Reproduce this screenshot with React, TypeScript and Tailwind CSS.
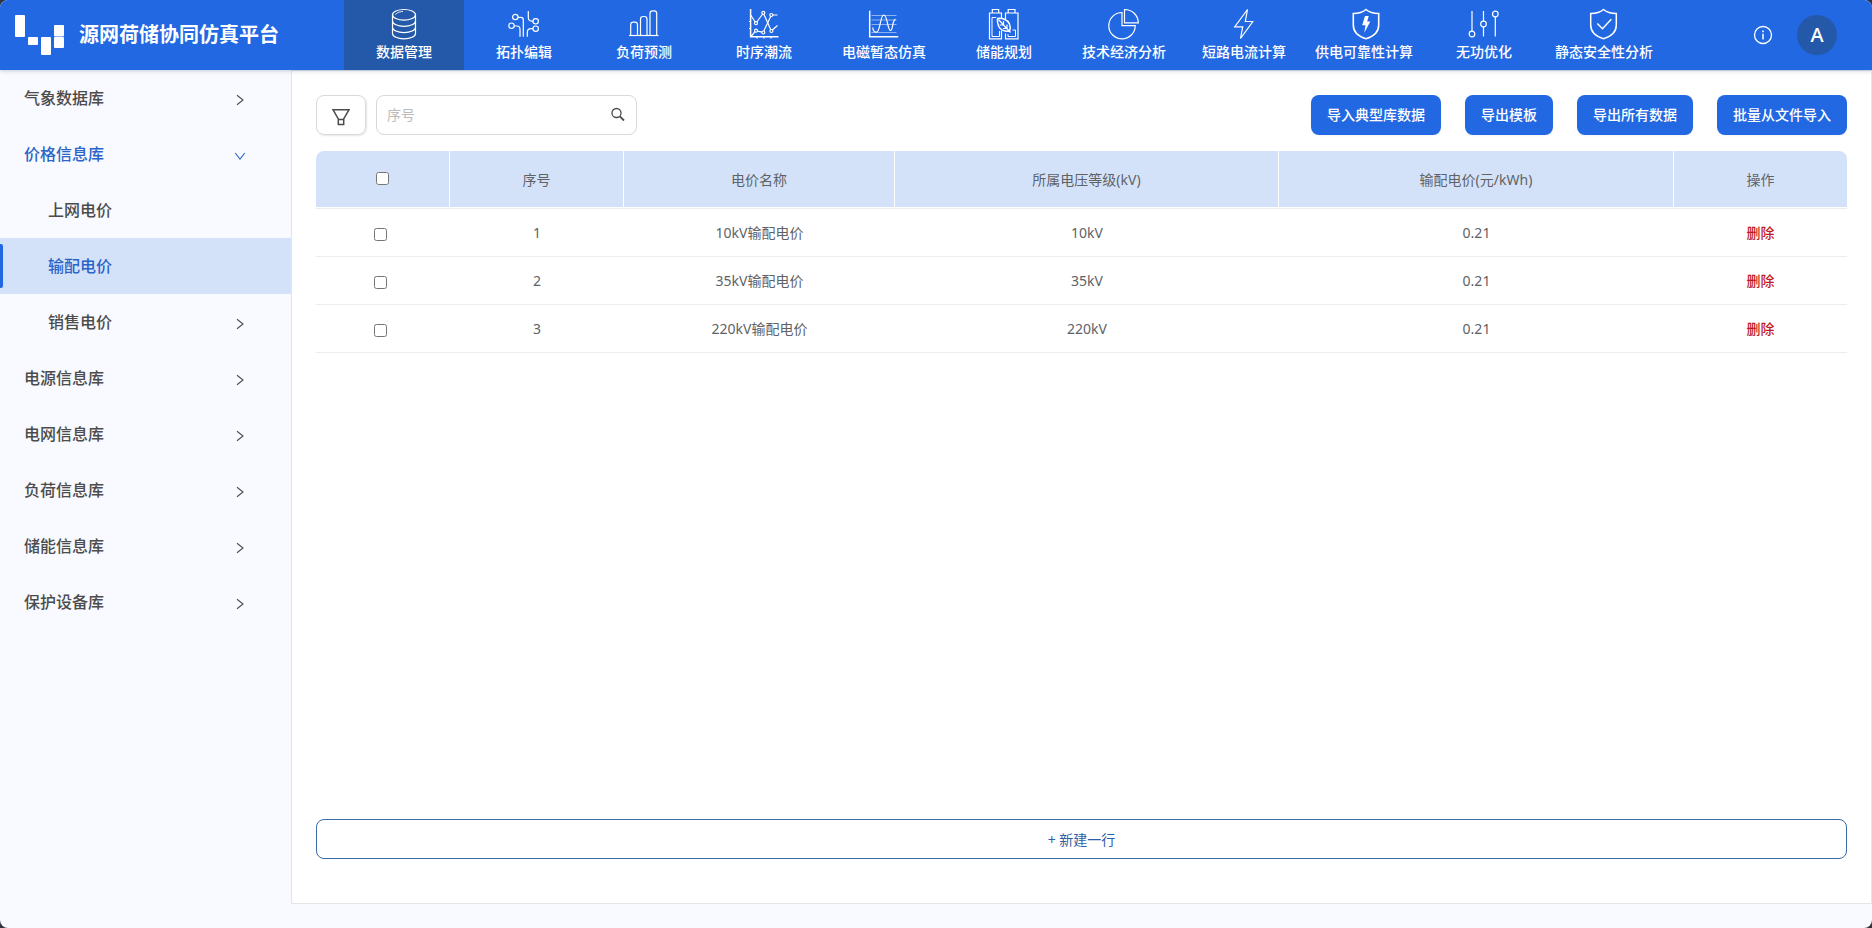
import type { ReactNode } from "react";

interface NavItem {
  label: string;
  icon: ReactNode;
}

interface MenuItem {
  label: string;
  state?: "open" | "active";
  child?: boolean;
  leaf?: boolean;
}

interface PriceRow {
  id: number;
  name: string;
  level: string;
  price: string;
}

const navItems: NavItem[] = [
  {
    label: "数据管理",
    icon: (
      <>
        <ellipse cx="16" cy="6.8" rx="11.5" ry="5.3" />
        <path d="M4.5 6.8V25.5C4.5 28.5 9.6 30.8 16 30.8S27.5 28.5 27.5 25.5V6.8" />
        <path d="M4.5 13C4.5 16 9.6 18.3 16 18.3S27.5 16 27.5 13" />
        <path d="M4.5 19.3C4.5 22.3 9.6 24.6 16 24.6S27.5 22.3 27.5 19.3" />
        <path d="M7.5 6.8C8 5 11.5 3.6 15 3.5" strokeWidth="0.9" />
      </>
    ),
  },
  {
    label: "拓扑编辑",
    icon: (
      <>
        <circle cx="7.3" cy="9" r="2.7" />
        <circle cx="3.5" cy="17.7" r="2.7" />
        <circle cx="27.7" cy="13.3" r="2.7" />
        <circle cx="27.7" cy="20.7" r="2.7" />
        <path d="M10 9.3H12.8Q15.3 9.3 15.3 12V28.7" />
        <path d="M6.2 18H9Q12 18 12 21.5V28.7" />
        <path d="M20.3 3V9.5Q20.3 13.3 25 13.3" />
        <path d="M25 20.7H23Q19.3 20.7 19.3 24.5V28.7" />
      </>
    ),
  },
  {
    label: "负荷预测",
    icon: (
      <>
        <path d="M1 27.5H30.5" />
        <path d="M2.7 27.5V17Q2.7 14.2 5.2 14.2H7Q9.5 14.2 9.5 17V27.5" />
        <path d="M12.5 27.5V11.2Q12.5 8.5 15 8.5H16.5Q19 8.5 19 11.2V27.5" />
        <path d="M22 27.5V5.5Q22 2.8 24.5 2.8H26.2Q28.7 2.8 28.7 5.5V27.5" />
      </>
    ),
  },
  {
    label: "时序潮流",
    icon: (
      <>
        <path d="M2.6 1V28.8H30.5" strokeWidth="1.5" />
        <path d="M1 13.5H2.6M1 20.5H2.6M9 28.8V30.5M16 28.8V30.5M23 28.8V30.5" />
        <path d="M2.6 7L7.3 14M8.7 14L14.7 6M15.9 6.2L22.8 21.7M24.3 22L29.5 17.5" />
        <path d="M3 28.5L7 23.7M9.3 23L14 24.2M15.8 23L22.7 8.4M24.5 7H29.5" />
        <circle cx="8" cy="15.2" r="1.5" />
        <circle cx="15.3" cy="4.8" r="1.5" />
        <circle cx="23.4" cy="23" r="1.5" />
        <circle cx="8" cy="22.7" r="1.5" />
        <circle cx="15.3" cy="24.5" r="1.5" />
        <circle cx="23.3" cy="7" r="1.5" />
      </>
    ),
  },
  {
    label: "电磁暂态仿真",
    icon: (
      <>
        <path d="M1.7 2.7V28.8H30.3" strokeWidth="1.5" />
        <path
          d="M3.5 7.5H28.5M3.5 12H28.5M3.5 16.5H28.5M3.5 24.5H28.5"
          strokeWidth="0.7"
          opacity="0.7"
        />
        <path d="M4.7 19.5C5 22.5 6.5 24.2 8.3 24.2C12.5 24.2 12 7 15.8 7C19.5 7 19.5 22.5 22.5 22.5C25.2 22.5 24 12 27.5 11.3" />
      </>
    ),
  },
  {
    label: "储能规划",
    icon: (
      <>
        <path d="M4.3 5V1.5H10.7V5M20.2 5V1.5H27V5" />
        <path d="M13.5 10V5H1.5V30.8H13.5V22.5" />
        <path d="M11.5 23V28.5H4V9.5H8" strokeWidth="1" />
        <path d="M17.5 11V5H30V30.8H17.5V25.5" />
        <path d="M20 26V28.5H27.5V22H24.5" strokeWidth="1" />
        <path
          d="M9.5 10.5C14 9.8 19.5 11.5 21.5 16C22.5 18.5 22.2 21.5 21.5 23.3C17.5 23.5 12.5 22.5 10.5 18C9.5 15.5 9.2 13 9.5 10.5Z"
          strokeWidth="1.5"
        />
        <path d="M10.5 11.5L22.5 24.5M15.5 13V17H11.5M19 16.5V20.5H15" strokeWidth="1.2" />
      </>
    ),
  },
  {
    label: "技术经济分析",
    icon: (
      <>
        <path d="M14 4.5A13.2 13.2 0 1 0 27.2 17.7H14Z" />
        <path d="M16.5 1.5V14.8H30.3A13.5 13.5 0 0 0 16.5 1.5Z" />
      </>
    ),
  },
  {
    label: "短路电流计算",
    icon: <path d="M19.5 1.5L6.7 18.8H14.7L12.5 30.5L24.8 13.5H17.3Z" />,
  },
  {
    label: "供电可靠性计算",
    icon: (
      <>
        <path
          d="M18 1.5C21.5 4.5 26 5.5 30.7 5.5V17C30.7 24 25.5 28.5 18 30.7C10.5 28.5 5.3 24 5.3 17V5.5C10 5.5 14.5 4.5 18 1.5Z"
          strokeWidth="1.6"
        />
        <path
          d="M17 8H20.7L19.2 13.5H22.3L16.3 24.7L17.5 17.3H14.2Z"
          fill="currentColor"
          stroke="none"
        />
      </>
    ),
  },
  {
    label: "无功优化",
    icon: (
      <>
        <path d="M4 3V23M15.5 3V13M15.5 19V28.5M27.3 9V28.5" />
        <circle cx="4" cy="26" r="2.8" />
        <circle cx="15.5" cy="16" r="2.8" />
        <circle cx="27.3" cy="6" r="2.8" />
      </>
    ),
  },
  {
    label: "静态安全性分析",
    icon: (
      <>
        <path
          d="M15.5 1.5C19 4.5 23.5 5.5 28.3 5.5V17C28.3 24 23 28.5 15.5 30.7C8 28.5 2.7 24 2.7 17V5.5C7.5 5.5 12 4.5 15.5 1.5Z"
          strokeWidth="1.5"
        />
        <path d="M9.3 15.5L14.5 20.7L23.3 11.3" strokeWidth="1.5" />
      </>
    ),
  },
];

const menuItems: MenuItem[] = [
  { label: "气象数据库" },
  { label: "价格信息库", state: "open" },
  { label: "上网电价", child: true, leaf: true },
  { label: "输配电价", child: true, leaf: true, state: "active" },
  { label: "销售电价", child: true },
  { label: "电源信息库" },
  { label: "电网信息库" },
  { label: "负荷信息库" },
  { label: "储能信息库" },
  { label: "保护设备库" },
];

const rows: PriceRow[] = [
  { id: 1, name: "10kV输配电价", level: "10kV", price: "0.21" },
  { id: 2, name: "35kV输配电价", level: "35kV", price: "0.21" },
  { id: 3, name: "220kV输配电价", level: "220kV", price: "0.21" },
];

const actions = ["导入典型库数据", "导出模板", "导出所有数据", "批量从文件导入"];

const columns = ["序号", "电价名称", "所属电压等级(kV)", "输配电价(元/kWh)", "操作"];

function Header() {
  return (
    <header className="relative z-10 flex h-[70px] shrink-0 items-stretch bg-[#2268e2] text-white shadow-[0_1px_4px_rgba(30,60,120,0.25)]">
      <div className="flex w-[344px] shrink-0 items-center pl-[15px]">
        <svg width="50" height="40" viewBox="0 0 50 40" fill="currentColor" aria-hidden="true">
          <rect x="0" y="0" width="10" height="22" rx="1" />
          <rect x="13" y="22" width="10" height="8" rx="1" />
          <rect x="26" y="22" width="10" height="18" rx="1" />
          <rect x="39" y="10" width="10" height="11.5" rx="1" />
          <rect x="39" y="22" width="10" height="11" rx="1" />
        </svg>
        <h1 className="ml-3.5 whitespace-nowrap text-xl font-bold">源网荷储协同仿真平台</h1>
      </div>
      <nav className="flex">
        {navItems.map((item, i) => (
          <button
            key={item.label}
            type="button"
            aria-current={i === 0 ? "page" : undefined}
            className={`flex w-[120px] flex-col items-center pt-2 text-sm font-medium whitespace-nowrap ${
              i === 0 ? "bg-[#2459a9]" : ""
            }`}
          >
            <svg
              width="32"
              height="32"
              viewBox="0 0 32 32"
              fill="none"
              stroke="currentColor"
              strokeWidth="1.2"
              aria-hidden="true"
            >
              {item.icon}
            </svg>
            <span className="mt-0.5">{item.label}</span>
          </button>
        ))}
      </nav>
      <div className="ml-auto flex items-center gap-6 pr-[35px]">
        <button type="button" aria-label="关于">
          <svg
            width="20"
            height="20"
            viewBox="0 0 20 20"
            fill="none"
            stroke="currentColor"
            strokeWidth="1.3"
          >
            <circle cx="10" cy="10" r="8.5" />
            <path d="M10 8.8V14.5M10 5.5V7.2" strokeWidth="1.5" />
          </svg>
        </button>
        <button
          type="button"
          className="h-10 w-10 rounded-full bg-[#2459a9] text-xl font-medium"
        >
          A
        </button>
      </div>
    </header>
  );
}

function Chevron({ open }: { open: boolean }) {
  return (
    <svg
      width="12"
      height="12"
      viewBox="0 0 12 12"
      fill="none"
      stroke="currentColor"
      strokeWidth="1.1"
      aria-hidden="true"
      className="mt-1"
    >
      <path d={open ? "M1.2 3L6 9L10.8 3" : "M3 1.2L9 6L3 10.8"} />
    </svg>
  );
}

function Sidebar() {
  return (
    <aside className="w-[291px] shrink-0">
      <ul>
        {menuItems.map((item) => (
          <li key={item.label} className="relative">
            {item.state === "active" && (
              <span className="absolute top-1.5 bottom-1.5 left-0 w-[3px] rounded-r-xs bg-[#2268e2]" />
            )}
            <button
              type="button"
              className={`flex h-14 w-full items-center justify-between pr-[45px] text-base font-medium ${
                item.child ? "pl-12" : "pl-6"
              } ${item.state ? "text-[#2b64c8]" : "text-[#4c4c4c]"} ${
                item.state === "active" ? "bg-[#d4e2f9]" : ""
              }`}
            >
              {item.label}
              {!item.leaf && <Chevron open={item.state === "open"} />}
            </button>
          </li>
        ))}
      </ul>
    </aside>
  );
}

function Toolbar() {
  return (
    <div className="flex items-center">
      <button
        type="button"
        aria-label="筛选"
        className="flex h-10 w-[50px] items-center justify-center rounded-lg border border-[#d9d9d9] text-[#4c4c4c] shadow-[1px_1px_2px_rgba(0,0,0,0.1)]"
      >
        <svg
          width="18"
          height="18"
          viewBox="0 0 18 18"
          fill="none"
          stroke="currentColor"
          strokeWidth="1.5"
          className="mt-1"
        >
          <path d="M1 1.7H17L11.7 11V16.5H6.3V11Z" />
          <path d="M6.3 11.5H11.7" />
        </svg>
      </button>
      <div className="ml-2.5 flex h-10 w-[261px] items-center rounded-lg border border-[#d9d9d9] px-2.5">
        <input
          type="text"
          aria-label="序号"
          placeholder="序号"
          className="min-w-0 flex-1 text-sm text-[#4c4c4c] outline-none placeholder:text-[#bbbbbb]"
        />
        <button type="button" aria-label="搜索" className="text-[#4c4c4c]">
          <svg
            width="16"
            height="16"
            viewBox="0 0 16 16"
            fill="none"
            stroke="currentColor"
            strokeWidth="1.3"
          >
            <circle cx="6.5" cy="6" r="4.5" />
            <path d="M9.8 9.3L14 13.5" strokeWidth="1.8" />
          </svg>
        </button>
      </div>
      <div className="ml-auto flex gap-6">
        {actions.map((label) => (
          <button
            key={label}
            type="button"
            className="h-10 rounded-lg bg-[#2268e2] px-4 text-sm font-medium whitespace-nowrap text-white shadow-xs"
          >
            {label}
          </button>
        ))}
      </div>
    </div>
  );
}

function PriceTable() {
  return (
    <table className="mt-4 w-full table-fixed border-separate border-spacing-0 text-center text-sm text-[#606266]">
      <colgroup>
        <col className="w-[134px]" />
        <col className="w-[174px]" />
        <col className="w-[271px]" />
        <col className="w-[384px]" />
        <col className="w-[395px]" />
        <col className="w-[173px]" />
      </colgroup>
      <thead>
        <tr>
          <th className="h-[57px] rounded-tl-lg border-r border-b border-white bg-[#d4e2f9] pb-1">
            <input type="checkbox" aria-label="全选" className="align-middle" />
          </th>
          {columns.map((name) => (
            <th
              key={name}
              className="h-[57px] border-r border-b border-white bg-[#d4e2f9] pt-0.5 font-normal last:rounded-tr-lg last:border-r-0"
            >
              {name}
            </th>
          ))}
        </tr>
      </thead>
      <tbody className="[&_td]:h-12 [&_td]:border-t [&_td]:border-[#ebeef0] [&>tr:last-child>td]:h-[49px] [&>tr:last-child>td]:border-b">
        {rows.map((row) => (
          <tr key={row.id}>
            <td className="pt-0.5 pr-1.5">
              <input type="checkbox" aria-label={row.name} className="align-middle" />
            </td>
            <td>{row.id}</td>
            <td>{row.name}</td>
            <td>{row.level}</td>
            <td>{row.price}</td>
            <td>
              <button type="button" className="font-medium text-[#c01c1c]">
                删除
              </button>
            </td>
          </tr>
        ))}
      </tbody>
    </table>
  );
}

export default function App() {
  return (
    <div className="bg-[#2f3440] font-['Noto_Sans','Noto_Sans_CJK_SC',sans-serif]">
      <div className="flex min-h-screen flex-col overflow-hidden rounded-lg bg-[#f8faff]">
        <Header />
        <div className="flex flex-1">
          <Sidebar />
          <main className="mb-6 flex min-w-0 flex-1 flex-col border border-[#e2e5ea] bg-white px-6 pt-6 pb-11">
            <Toolbar />
            <PriceTable />
            <button
              type="button"
              className="mt-auto h-10 w-full rounded-lg border border-[#3c6aa5] pt-0.5 text-sm text-[#2d5fa8]"
            >
              + 新建一行
            </button>
          </main>
        </div>
      </div>
    </div>
  );
}
